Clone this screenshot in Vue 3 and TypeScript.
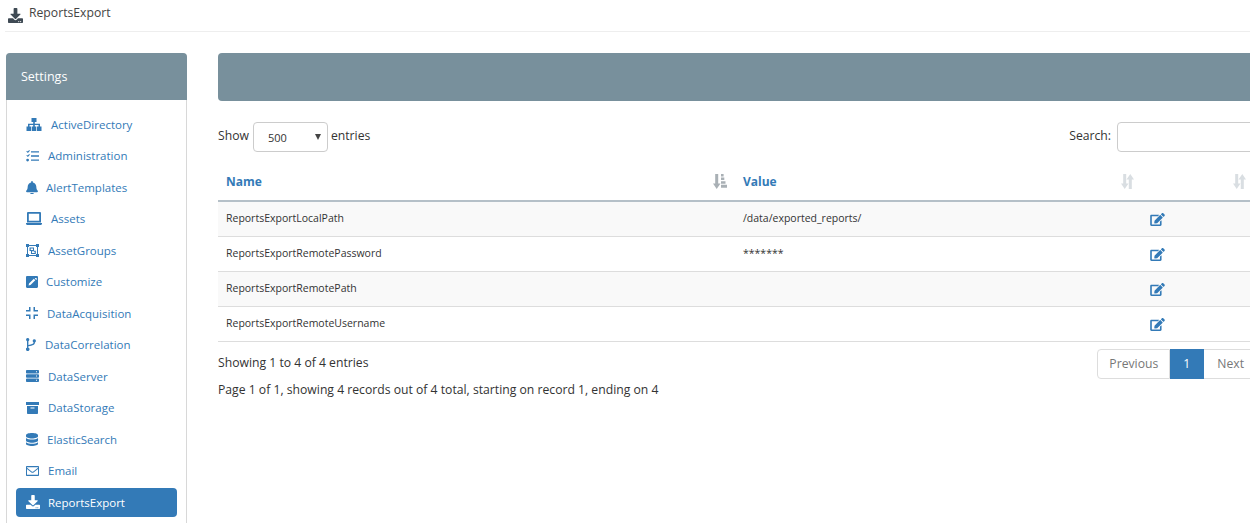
<script setup lang="ts">
interface NavItem { name: string; w: number; vb: string; d: string; px: number; active?: boolean }
const DOWNLOAD = 'M216 0h80c13.3 0 24 10.7 24 24v168h87.7c17.8 0 26.7 21.5 14.1 34.1L269.7 378.3c-7.5 7.5-19.8 7.5-27.3 0L90.1 226.1c-12.6-12.6-3.7-34.1 14.1-34.1H192V24c0-13.3 10.7-24 24-24zm296 376v112c0 13.3-10.7 24-24 24H24c-13.3 0-24-10.7-24-24V376c0-13.3 10.7-24 24-24h146.7l49 49c20.1 20.1 52.5 20.1 72.6 0l49-49H488c13.3 0 24 10.7 24 24zm-124 88c0-11-9-20-20-20s-20 9-20 20 9 20 20 20 20-9 20-20zm64 0c0-11-9-20-20-20s-20 9-20 20 9 20 20 20 20-9 20-20z'
const EDIT = 'M402.6 83.2l90.2 90.2c3.8 3.8 3.8 10 0 13.8L274.4 405.6l-92.8 10.3c-12.4 1.4-22.9-9.1-21.5-21.5l10.3-92.8L388.8 83.2c3.8-3.8 10-3.8 13.8 0zm162-22.9l-48.8-48.8c-15.2-15.2-39.9-15.2-55.2 0l-35.4 35.4c-3.8 3.8-3.8 10 0 13.8l90.2 90.2c3.8 3.8 10 3.8 13.8 0l35.4-35.4c15.2-15.3 15.2-40 0-55.2zM384 346.2V448H64V128h229.8c3.2 0 6.2-1.3 8.5-3.5l40-40c7.6-7.6 2.2-20.5-8.5-20.5H48C21.5 64 0 85.5 0 112v352c0 26.5 21.5 48 48 48h352c26.500 0 48-21.500 48-48V306.200c0-10.700-12.900-16-20.500-8.500l-40 40c-2.200 2.300-3.500 5.300-3.500 8.500z'
const SORT_BOTH = 'M2.200 0h3v9.500h2.300L3.700 15 0 9.500h2.200zM9.300 0 13 5.500h-2.200V15h-3V5.500H5.500z'
const SORT_DESC = 'M2.200 0h3v9.500h2.300L3.700 15 0 9.500h2.200zM8 0h2.600v2.500H8zM8 3.600h3.300v2.500H8zM8 7.200h4.500v2.500H8zM8 10.800h6v3H8z'
const nav: NavItem[] = [
  { name: 'ActiveDirectory', w: 25, px: 16, vb: '0 0 16 13', d: 'M5.500 0h5v4H8.800v1.700h5.200v2.800h1.500V13h-4.500V8.500h1.500V7H8.800v1.500h1.500V13H5.700V8.500h1.500V7H3.500v1.500H5V13H.5V8.500H2V5.700h5.200V4H5.500z' },
  { name: 'Administration', w: 22, px: 13, vb: '0 0 13 12', d: 'M5 1.200h8v1.400H5zM5 5.300h8v1.400H5zM5 9.400h8v1.400H5zM.3 1.400l.7-.6.7.7L3.200 0l.7.7-2 2.300zM.3 5.500l.7-.6.7.7 1.500-1.500.7.7-2 2.300zM1.600 8.700a1.400 1.400 0 1 1 0 2.800 1.400 1.400 0 0 1 0-2.800z' },
  { name: 'AlertTemplates', w: 20, px: 12, vb: '0 0 448 512', d: 'M224 512c35.320 0 63.970-28.650 63.970-64H160.030c0 35.350 28.650 64 63.970 64zm215.390-149.710c-19.320-20.760-55.470-51.990-55.470-154.290 0-77.700-54.480-139.900-127.940-155.160V32c0-17.670-14.320-32-31.980-32s-31.980 14.330-31.980 32v20.840C118.560 68.100 64.080 130.300 64.080 208c0 102.300-36.150 133.530-55.470 154.290-6 6.450-8.660 14.160-8.610 21.710.11 16.400 12.980 32 32.100 32h383.800c19.120 0 32-15.600 32.100-32 .05-7.550-2.610-15.270-8.610-21.710z' },
  { name: 'Assets', w: 25, px: 16, vb: '0 0 16 13', d: 'M2 0h12a1 1 0 0 1 1 1v9.500H1V1a1 1 0 0 1 1-1zm.8 1.800v6.900h10.400V1.800zM0 10.900h16v.9a1.100 1.100 0 0 1-1.100 1.100H1.100A1.100 1.100 0 0 1 0 11.800z' },
  { name: 'AssetGroups', w: 22, px: 13, vb: '0 0 13 13', d: 'M0 0h3v1h7V0h3v3h-1v7h1v3h-3v-1H3v1H0v-3h1V3H0zm2 3v7h1v1h7v-1h1V3h-1V2H3v1zM3.500 3.500H8v3.200h1.800V10H5V7H3.500zm1.200 1.100V6H7V4.600zM6 7.300v1.700h2.700V7.800H7.900v-.5z' },
  { name: 'Customize', w: 20, px: 12, vb: '0 0 12 12', d: 'M1.200 0h9.600C11.500 0 12 .5 12 1.200v9.600c0 .7-.5 1.200-1.200 1.200H1.200C.5 12 0 11.500 0 10.800V1.200C0 .5.500 0 1.200 0zm6.600 2.700L3 7.500 2.600 9.400l1.900-.4 4.800-4.800zm1-.1 1.400 1.400.5-.5c.3-.3.3-.7 0-1l-.4-.4c-.3-.3-.7-.3-1 0z' },
  { name: 'DataAcquisition', w: 21, px: 12, vb: '0 0 12 12', d: 'M3 0h1.500v4.500H0V3h3zM7.500 0H9v3h3v1.500H7.500zM0 7.500h4.500V12H3V9H0zM7.500 7.500H12V9H9v3H7.500z' },
  { name: 'DataCorrelation', w: 19, px: 10, vb: '0 0 10 13', d: 'M1.700 0a1.700 1.700 0 0 1 .7 3.200v6.600a1.700 1.700 0 1 1-1.400 0V3.200A1.700 1.700 0 0 1 1.700 0zm6.600 1.200a1.700 1.700 0 0 1 .7 3.200C8.800 6.600 7 7.400 2.400 8.200V6.900c3.400-.6 4.800-1.100 5.200-2.500a1.700 1.700 0 0 1 .7-3.200z' },
  { name: 'DataServer', w: 22, px: 13, vb: '0 0 13 12', d: 'M.8 0h11.400c.4 0 .8.4.8.8v2c0 .4-.4.8-.8.8H.8C.4 3.600 0 3.200 0 2.800v-2C0 .4.400 0 .8 0zm9.200 1.300v1h1v-1zM.8 4.200h11.400c.4 0 .8.4.8.8v2c0 .4-.4.8-.8.8H.8C.4 7.800 0 7.400 0 7V5c0-.4.400-.8.800-.8zM10 5.500v1h1v-1zM.8 8.400h11.400c.4 0 .8.4.8.8v2c0 .4-.4.8-.8.8H.8c-.4 0-.8-.4-.8-.8v-2c0-.4.400-.8.800-.8zm9.200 1.300v1h1v-1z' },
  { name: 'DataStorage', w: 22, px: 13, vb: '0 0 13 12', d: 'M0 0h13v3H0zM1 4h11v7.200c0 .5-.3.8-.8.8H1.800c-.5 0-.8-.3-.8-.8zm3.500 1.500v1h4v-1z' },
  { name: 'ElasticSearch', w: 21, px: 12, vb: '0 0 12 13', d: 'M6 0c3.300 0 6 .9 6 2.200v1.100C12 4.600 9.300 5.500 6 5.500S0 4.600 0 3.300V2.200C0 .9 2.700 0 6 0zM0 5c1.300 1 3.600 1.500 6 1.500S10.700 6 12 5v2.600C12 8.900 9.300 9.800 6 9.800S0 8.900 0 7.600zM0 9.200c1.300 1 3.600 1.500 6 1.500s4.700-.5 6-1.500v1.600C12 12.100 9.300 13 6 13S0 12.100 0 10.800z' },
  { name: 'Email', w: 22, px: 13, vb: '0 0 13 10', d: 'M1 0h11c.6 0 1 .4 1 1v8c0 .6-.4 1-1 1H1c-.6 0-1-.4-1-1V1c0-.6.400-1 1-1zm0 1.200v.6l4.700 3.700c.5.4 1.100.4 1.600 0L12 1.800v-.6zM12 3.100 7.900 6.300c-.9.7-1.900.7-2.800 0L1 3.100v5.700h11z' },
  { name: 'ReportsExport', w: 22, px: 14, vb: '0 0 512 512', d: DOWNLOAD, active: true },
]
const rows = [
  { name: 'ReportsExportLocalPath', value: '/data/exported_reports/' },
  { name: 'ReportsExportRemotePassword', value: '*******' },
  { name: 'ReportsExportRemotePath', value: '' },
  { name: 'ReportsExportRemoteUsername', value: '' },
]
</script>

<template>
  <div class="page">
    <header class="top">
      <svg class="top-icon" viewBox="0 0 512 512"><path :d="DOWNLOAD" /></svg>
      <span>ReportsExport</span>
    </header>
    <div class="layout">
      <aside class="side">
        <div class="side-head">Settings</div>
        <ul class="side-list">
          <li v-for="item in nav" :key="item.name" :class="['side-item', { active: item.active }]">
            <span class="side-ico" :style="{ width: item.w + 'px' }">
              <svg :viewBox="item.vb" :width="item.px"><path :d="item.d" fill-rule="evenodd" /></svg>
            </span>
            <span>{{ item.name }}</span>
          </li>
        </ul>
      </aside>
      <main class="main">
        <div class="bar"></div>
        <div class="controls">
          <div class="show">
            <span class="lbl">Show</span>
            <span class="select"><span>500</span><i class="caret"></i></span>
            <span class="lbl">entries</span>
          </div>
          <div class="search"><span class="lbl">Search:</span><span class="search-box"></span></div>
        </div>
        <table class="grid">
          <colgroup><col class="c1" /><col class="c2" /><col class="c3" /></colgroup>
          <thead>
            <tr>
              <th>Name
                <svg class="sort dark" viewBox="0 0 14 15"><path :d="SORT_DESC" /></svg>
              </th>
              <th>Value
                <svg class="sort" viewBox="0 0 13 15"><path :d="SORT_BOTH" /></svg>
              </th>
              <th>
                <svg class="sort" viewBox="0 0 13 15"><path :d="SORT_BOTH" /></svg>
              </th>
            </tr>
          </thead>
          <tbody>
            <tr v-for="r in rows" :key="r.name">
              <td>{{ r.name }}</td>
              <td>{{ r.value }}</td>
              <td><svg class="edit" viewBox="0 0 576 512"><path :d="EDIT" /></svg></td>
            </tr>
          </tbody>
        </table>
        <div class="foot">
          <div class="info">
            <div>Showing 1 to 4 of 4 entries</div>
            <div class="info-2">Page 1 of 1, showing 4 records out of 4 total, starting on record 1, ending on 4</div>
          </div>
          <div class="pager">
            <span class="pg first">Previous</span><span class="pg cur">1</span><span class="pg">Next</span>
          </div>
        </div>
      </main>
    </div>
  </div>
</template>

<style>
html, body { margin: 0; height: 100%; overflow: hidden; background: #fff; }
</style>

<style scoped>
.page { width: 1300px; height: 523px; overflow: hidden; font-family: "Open Sans", sans-serif; font-size: 12.2px; color: #333; }
.top { height: 32px; margin-left: 5px; box-sizing: border-box; border-bottom: 1px solid #eee; display: flex; align-items: center; padding: 0 0 5px 3px; gap: 6px; line-height: 16px; color: #444; }
.top-icon { width: 15px; height: 15px; fill: #3f4a54; margin-top: 4px; }
.layout { display: flex; padding: 21px 0 0 6px; gap: 31px; }
.side { width: 181px; flex: none; height: 480px; box-sizing: border-box; border: 1px solid #d8d8d8; border-radius: 4px 4px 0 0; }
.side-head { height: 47px; margin: -1px -1px 0; background: #78909c; color: #fff; font-size: 12.5px; font-weight: 400; line-height: 47px; padding-left: 15px; border-radius: 4px 4px 0 0; }
.side-list { list-style: none; margin: 0; padding: 9.9px 9px 0; }
.side-item { height: 29px; margin-bottom: 2.5px; display: flex; align-items: center; padding-left: 10px; font-size: 11.5px; color: #337ab7; border-radius: 4px; }
.side-item.active { background: #337ab7; color: #fff; }
.side-ico { flex: none; display: flex; align-items: center; }
.side-ico svg { display: block; fill: currentColor; }
.main { width: 1040px; flex: none; }
.bar { height: 48px; background: #78909c; border-radius: 4px; }
.controls { display: flex; justify-content: space-between; align-items: center; height: 30px; margin-top: 21px; }
.lbl { margin-bottom: 3px; }
.show { display: flex; align-items: center; gap: 4px; }
.select { width: 75px; height: 30px; margin-right: -1px; box-sizing: border-box; border: 1px solid #ccc; border-radius: 4px; display: flex; align-items: center; justify-content: space-between; padding: 0 6px 0 14px; font-size: 11px; }
.caret { width: 0; height: 0; border-left: 3.5px solid transparent; border-right: 3.5px solid transparent; border-top: 6px solid #444; }
.search { display: flex; align-items: center; gap: 6px; }
.search-box { width: 141px; height: 30px; box-sizing: border-box; border: 1px solid #ccc; border-radius: 4px; }
.grid { width: 1035px; table-layout: fixed; border-collapse: collapse; margin-top: 12px; font-size: 10.5px; }
.c1 { width: 517px; }
.c2 { width: 406px; }
.grid th { position: relative; height: 37px; padding: 0 8px 2px; box-sizing: border-box; text-align: left; font-size: 12px; font-weight: 700; color: #337ab7; border-bottom: 2px solid #b5c0c8; }
.sort { position: absolute; right: 7px; top: 10px; width: 13px; height: 15px; fill: #d9dee2; }
.sort.dark { right: 8px; width: 14px; fill: #a9b0b5; }
.grid td { height: 32px; padding: 0 8px 2px; box-sizing: content-box; border-bottom: 1px solid #ddd; vertical-align: middle; }
.grid tbody tr:nth-child(odd) { background: #f9f9f9; }
.edit { display: block; width: 15px; height: 13px; margin: 2px 0 0 1px; fill: #337ab7; }
.foot { display: flex; justify-content: space-between; margin-top: 10px; }
.info { line-height: 16px; padding-top: 3px; }
.info-2 { margin-top: 11px; }
.pager { display: flex; height: 30px; margin: -3px 0 0 auto; }
.pg { display: flex; align-items: center; padding: 0 13px 1px; border: 1px solid #ddd; border-left: 0; color: #777; }
.first { border-left: 1px solid #ddd; border-radius: 4px 0 0 4px; padding: 0 11px 1px; }
.cur { background: #337ab7; border-color: #337ab7; color: #fff; }
</style>
